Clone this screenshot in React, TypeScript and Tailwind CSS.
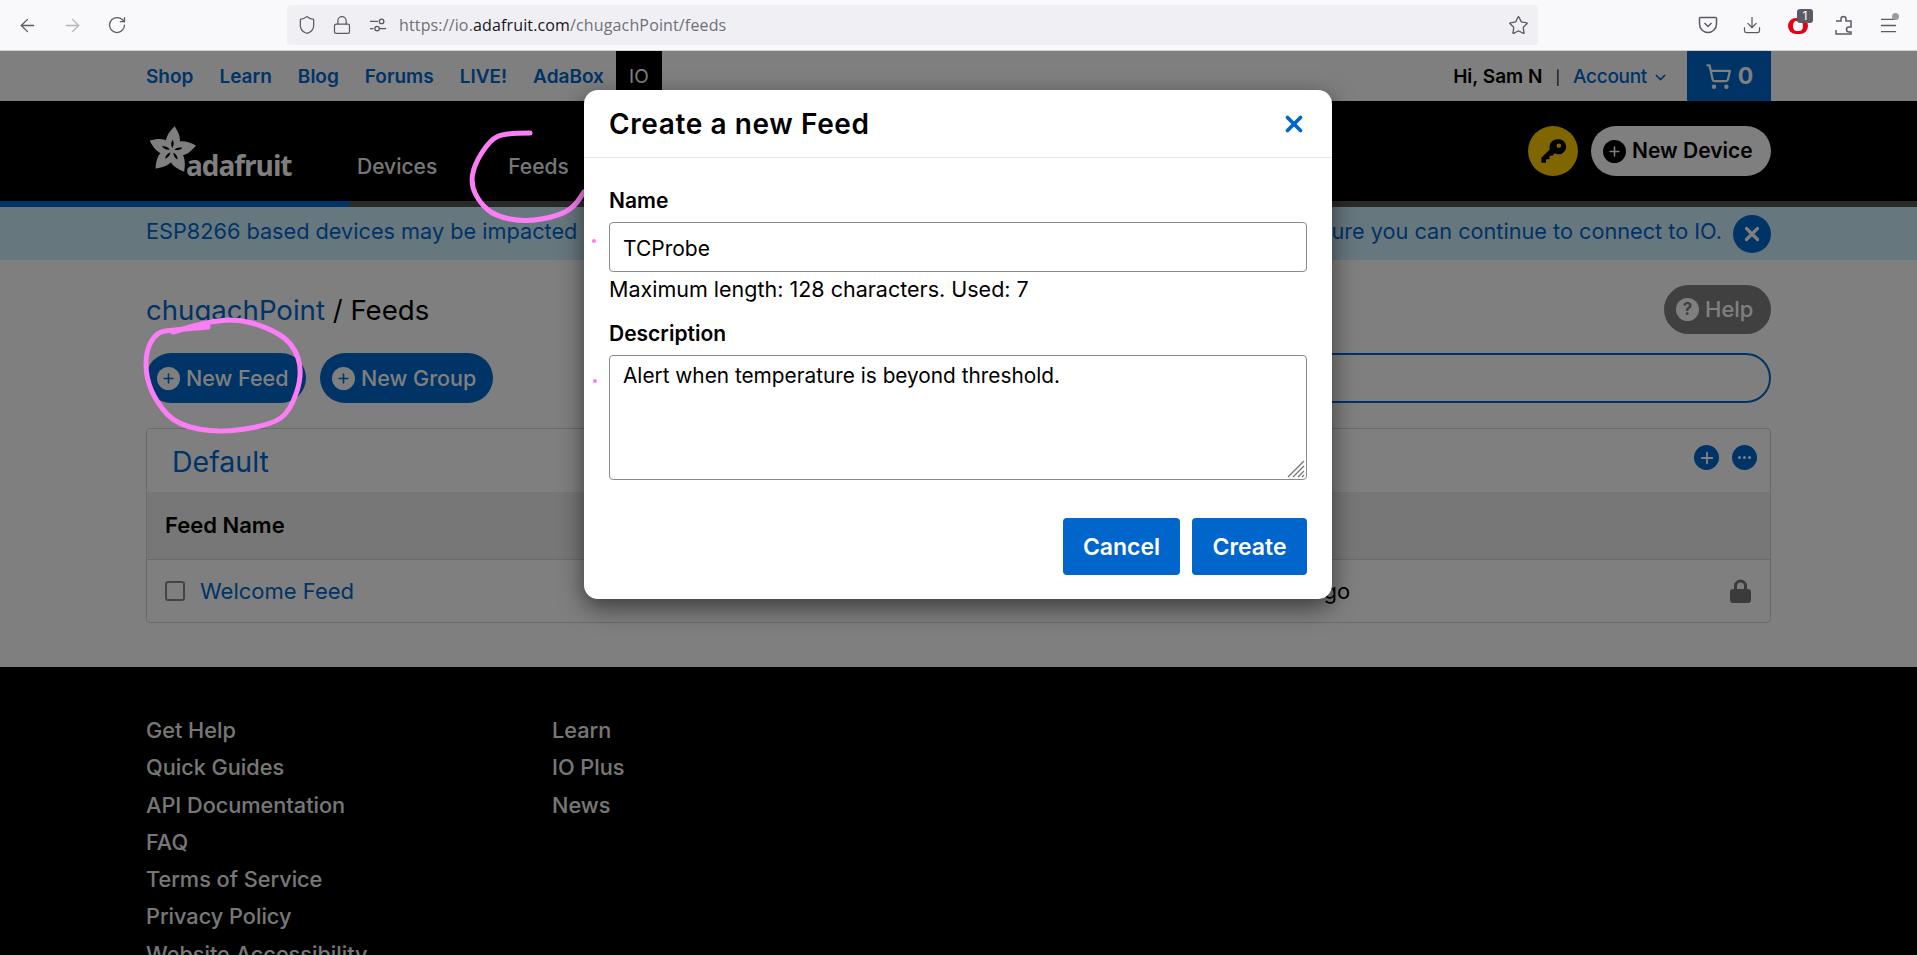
import {
  ArrowLeft,
  ArrowRight,
  ChevronDown,
  Download,
  Menu,
  Plus,
  RotateCw,
  Shield,
  Lock,
  ShoppingCart,
  Star,
  X,
} from "lucide-react";

const topLinks = ["Shop", "Learn", "Blog", "Forums", "LIVE!", "AdaBox"];
const footerLeft = [
  "Get Help",
  "Quick Guides",
  "API Documentation",
  "FAQ",
  "Terms of Service",
  "Privacy Policy",
  "Website Accessibility",
];
const footerRight = ["Learn", "IO Plus", "News"];

// midpoint smoothing, good enough for the hand drawn marker strokes
const smooth = (pts: number[][]) => {
  let d = `M${pts[0][0]} ${pts[0][1]}`;
  for (let i = 1; i < pts.length - 1; i++) {
    const mx = (pts[i][0] + pts[i + 1][0]) / 2;
    const my = (pts[i][1] + pts[i + 1][1]) / 2;
    d += ` Q${pts[i][0]} ${pts[i][1]} ${mx} ${my}`;
  }
  const last = pts[pts.length - 1];
  return d + ` L${last[0]} ${last[1]}`;
};

const feedsMark = [
  [530, 133],
  [505, 133],
  [490, 140],
  [474, 165],
  [471, 185],
  [480, 203],
  [495, 216],
  [525, 222],
  [558, 216],
  [574, 207],
  [584, 192],
];
const newFeedMark = [
  [208, 327],
  [173, 330],
  [157, 332],
  [146, 350],
  [146, 378],
  [157, 403],
  [177, 425],
  [220, 433],
  [270, 425],
  [290, 412],
  [303, 373],
  [293, 343],
  [267, 327],
  [237, 319],
  [207, 322],
  [173, 332],
];

function Flower() {
  return (
    <svg viewBox="0 0 100 100" className="w-[52px] h-[47px] shrink-0">
      {[0, 72, 144, 216, 288].map((a) => (
        <g key={a} transform={`rotate(${a + 4} 50 52)`}>
          <path d="M50 52 C26 40 36 18 52 0 C66 18 74 40 50 52Z" fill="#fff" />
          <path d="M50 47 C46 40 47 34 50 29 C53 34 54 40 50 47Z" fill="#000" />
        </g>
      ))}
    </svg>
  );
}

function PlusDot({ dark }: { dark?: boolean }) {
  return (
    <span
      className={`w-[23px] h-[23px] rounded-full flex items-center justify-center shrink-0 ${
        dark ? "bg-black text-white" : "bg-white text-[#0066cc]"
      }`}
    >
      <Plus size={15} strokeWidth={2.5} />
    </span>
  );
}

function BrowserBar() {
  return (
    <div className="h-[51px] bg-[#f9f9fb] border-b border-[#cfcfd8] flex items-center text-[#5b5b66] shrink-0">
      <div className="w-[287px] flex items-center pl-[17px] gap-[24px]">
        <ArrowLeft size={21} strokeWidth={1.5} />
        <ArrowRight size={21} strokeWidth={1.5} className="text-[#b5b5bb]" />
        <RotateCw size={20} strokeWidth={1.5} />
      </div>
      <div className="w-[1251px] h-[40px] rounded-[4px] bg-[#f0f0f4] flex items-center pl-[10px] pr-[9px]">
        <Shield size={20} strokeWidth={1.5} />
        <Lock size={20} strokeWidth={1.5} className="ml-[15px]" />
        <svg viewBox="0 0 20 20" className="w-[18px] h-[18px] ml-[17px]" fill="none" stroke="currentColor" strokeWidth="1.5">
          <path d="M1 6h9M1 14h4" />
          <circle cx="14" cy="6" r="2.5" />
          <circle cx="9" cy="14" r="2.5" />
          <path d="M12 14h7" />
        </svg>
        <span className="ml-[12px] text-[16px] font-['Open_Sans',sans-serif] text-[#6f6f78] tracking-[0.14px]">
          https://io.<span className="text-[#15141a]">adafruit.com</span>/chugachPoint/feeds
        </span>
        <Star size={21} strokeWidth={1.5} className="ml-auto" />
      </div>
      <div className="flex-1 relative">
        <svg viewBox="0 0 20 20" className="w-[20px] h-[20px] absolute left-[160px] top-[-10px]" fill="none" stroke="currentColor" strokeWidth="1.5">
          <path d="M2.5 2.5h15a1 1 0 0 1 1 1V9a8.5 8.5 0 0 1-17 0V3.500a1 1 0 0 1 1-1Z" />
          <path d="M6.500 8l3.500 3.500L13.500 8" />
        </svg>
        <Download size={20} strokeWidth={1.5} className="absolute left-[204px] top-[-10px]" />
        <div className="absolute left-[250px] top-[-7px] w-[20px] h-[16px] rounded-full border-x-[5px] border-y-[3px] border-[#e60012]" />
        <span className="absolute left-[259px] top-[-16px] w-[16px] h-[14px] rounded-[3px] bg-[#5b5b66] text-white text-[12px] leading-[14px] text-center">
          1
        </span>
        <svg viewBox="0 0 20 20" className="w-[20px] h-[22px] absolute left-[296px] top-[-11px]" fill="none" stroke="currentColor" strokeWidth="1.5">
          <path d="M2 6h5V4a2.500 2.500 0 0 1 5 0v2h5v6h-2a2.500 2.500 0 0 0 0 5v0h2v2H2v-4" />
        </svg>
        <Menu size={21} strokeWidth={1.5} className="absolute left-[340px] top-[-10px]" />
        <span className="absolute left-[354px] top-[-12px] w-[7px] h-[7px] rounded-full bg-[#9a9aa2]" />
      </div>
    </div>
  );
}

function TopNav() {
  return (
    <div className="h-[50px] bg-white flex items-center pl-[146px] pr-[146px] text-[19px] font-semibold text-[#0066cc]">
      <div className="flex items-center h-full pt-[3px] gap-[26px]">
        {topLinks.map((l) => (
          <a key={l}>{l}</a>
        ))}
      </div>
      <div className="h-full w-[46px] ml-[12px] pt-[3px] bg-black text-white font-normal flex items-center justify-center">IO</div>
      <div className="ml-auto flex items-center h-full">
        <span className="pt-[3px] text-black">Hi, Sam N</span>
        <span className="pt-[3px] mx-[13px] text-black font-normal text-[14px]">|</span>
        <span className="pt-[3px] font-medium tracking-[-0.3px]">Account</span>
        <ChevronDown size={17} className="mt-[3px] ml-[5px]" />
        <div className="ml-[18px] w-[84px] h-full bg-[#0066cc] text-white flex items-center justify-center gap-[6px] text-[23px] font-bold">
          <ShoppingCart size={27} strokeWidth={2} />
          <span>0</span>
        </div>
      </div>
    </div>
  );
}

function Header() {
  return (
    <div className="h-[106px] bg-black flex flex-col">
      <div className="flex-1 flex items-center px-[146px] text-white">
        <div className="flex items-end w-[211px] -translate-y-[2px]">
          <Flower />
          <span className="-ml-[12px] translate-y-[7px] text-[28px] leading-[30px] font-bold font-['Open_Sans',sans-serif] tracking-[-1.100px]">adafruit</span>
        </div>
        <a className="mt-[32px] text-[21px] font-medium text-[#eee]">Devices</a>
        <a className="mt-[32px] ml-[71px] text-[21px] font-medium text-[#eee]">Feeds</a>
        <div className="ml-auto flex items-center gap-[13px]">
          <span className="w-[50px] h-[50px] rounded-full bg-[#ffcc00] flex items-center justify-center">
            <svg viewBox="0 0 24 24" className="w-[28px] h-[28px]" fill="#000">
              <path d="M15.500 2a6.500 6.500 0 0 0-6.200 8.500L2 17.800V22h4v-3h3v-3h2.500l2-2a6.500 6.500 0 1 0 2-12Zm1.500 3.500a2 2 0 1 1 0 4 2 2 0 0 1 0-4Z" />
            </svg>
          </span>
          <span className="w-[180px] h-[50px] rounded-full bg-white text-black text-[21px] font-semibold flex items-center pl-[12px] gap-[6px]">
            <PlusDot dark />
            New Device
          </span>
        </div>
      </div>
      <div className="h-[6px] bg-[#555] shrink-0">
        <div className="h-full w-[349px] bg-[#0066cc]" />
      </div>
    </div>
  );
}

function FeedPanel() {
  return (
    <div className="mt-[25px] h-[195px] border border-[#d5d5d5] rounded-[4px] flex flex-col">
      <div className="h-[63px] flex items-center pl-[25px] pr-[13px]">
        <span className="pt-[4px] text-[28.500px] text-[#0066cc]">Default</span>
        <span className="ml-auto w-[25px] h-[25px] rounded-full bg-[#0066cc] text-white flex items-center justify-center -translate-y-[3px]">
          <Plus size={18} strokeWidth={2.5} />
        </span>
        <span className="ml-[13px] w-[25px] h-[25px] rounded-full bg-[#0066cc] text-white flex items-center justify-center gap-[2px] -translate-y-[3px]">
          <i className="w-[3px] h-[3px] rounded-full bg-white" />
          <i className="w-[3px] h-[3px] rounded-full bg-white" />
          <i className="w-[3px] h-[3px] rounded-full bg-white" />
        </span>
      </div>
      <div className="h-[68px] bg-[#eeeeee] border-b border-[#d5d5d5] grid grid-cols-[437px_575px_1fr] items-center font-semibold text-[22px] text-black pl-[18px]">
        <span>Feed Name</span>
        <span>Key</span>
        <span>Recorded</span>
      </div>
      <div className="flex-1 grid grid-cols-[437px_575px_1fr_auto] items-center text-[22px] text-black pl-[18px] pr-[19px]">
        <span className="flex items-center gap-[15px]">
          <span className="w-[20px] h-[20px] border-2 border-[#888] rounded-[3px]" />
          <a className="text-[#0066cc]">Welcome Feed</a>
        </span>
        <span>welcome-feed</span>
        <span>about 1 hour ago</span>
        <svg viewBox="0 0 21 24" className="w-[21px] h-[24px]" fill="#777">
          <path d="M4 11V7a6.500 6.500 0 0 1 13 0v4h-3V7a3.500 3.500 0 0 0-7 0v4Z" />
          <rect x="0" y="10" width="21" height="14" rx="3" />
        </svg>
      </div>
    </div>
  );
}

function Footer() {
  return (
    <div className="mt-[44px] bg-black pt-[45px] h-[400px] pl-[146px] flex text-[21.700px] font-medium leading-[37.300px] text-[#eee]">
      <div className="w-[406px] flex flex-col">
        {footerLeft.map((l) => (
          <a key={l}>{l}</a>
        ))}
      </div>
      <div className="flex flex-col">
        {footerRight.map((l) => (
          <a key={l}>{l}</a>
        ))}
      </div>
    </div>
  );
}

function Modal() {
  return (
    <div className="absolute left-[584px] top-[90px] w-[748px] h-[509px] bg-white rounded-[14px] shadow-[0_8px_24px_rgba(0,0,0,0.55)] flex flex-col text-black">
      <div className="h-[68px] border-b border-[#e5e5e5] flex items-center justify-between pl-[25px] pr-[25px] shrink-0">
        <h2 className="pt-[1px] text-[28px] font-semibold tracking-[0.6px]">Create a new Feed</h2>
        <X size={26} strokeWidth={3.5} className="text-[#0066cc]" />
      </div>
      <div className="flex-1 px-[25px] pt-[28px] flex flex-col">
        <label className="text-[21px] font-semibold leading-[30px]">Name</label>
        <input
          readOnly
          value="TCProbe"
          className="mt-[6px] h-[50px] px-[13px] pt-[2px] border border-[#8a8a8a] rounded-[4px] text-[21px] outline-none"
        />
        <p className="mt-[2px] text-[21.500px] leading-[30px]">Maximum length: 128 characters. Used: 7</p>
        <label className="mt-[15px] text-[21px] font-semibold leading-[30px]">Description</label>
        <div className="relative mt-[6px] h-[125px]">
          <textarea
            readOnly
            value="Alert when temperature is beyond threshold."
            className="w-full h-full resize-none px-[13px] pt-[4px] border border-[#8a8a8a] rounded-[4px] text-[20.800px] outline-none"
          />
          <svg viewBox="0 0 18 18" className="absolute right-[2px] bottom-[2px] w-[18px] h-[18px]" stroke="#777" strokeWidth="1.3">
            <path d="M1 17 17 1M6 17 17 6M11 17 17 11M15 17 17 15" />
          </svg>
        </div>
        <div className="mt-[38px] flex justify-end gap-[12px]">
          <button className="w-[117px] h-[57px] pt-[1px] rounded-[4px] bg-[#0066cc] text-white text-[23px] font-semibold">Cancel</button>
          <button className="w-[115px] h-[57px] pt-[1px] rounded-[4px] bg-[#0066cc] text-white text-[23px] font-semibold">Create</button>
        </div>
      </div>
    </div>
  );
}

export default function App() {
  return (
    <div className="relative h-[955px] overflow-hidden flex flex-col bg-white font-['Inter',sans-serif]">
      <BrowserBar />
      <div className="relative flex-1 overflow-hidden">
        <TopNav />
        <Header />
        <div className="h-[53px] bg-[#cfeffd] flex items-center justify-between pl-[146px] pr-[146px] text-[21.700px] text-[#0066cc]">
          <span className="-mt-[4px]">ESP8266 based devices may be impacted</span>
          <span className="flex items-center gap-[11px]">
            <span className="-mt-[4px]">ure you can continue to connect to IO.</span>
            <span className="w-[38px] h-[38px] rounded-full bg-[#0066cc] text-white flex items-center justify-center">
              <X size={22} strokeWidth={3.5} />
            </span>
          </span>
        </div>
        <main className="px-[146px] pt-[25px]">
          <div className="flex items-center justify-between h-[49px]">
            <h1 className="pt-[3px] text-[27.600px]">
              <a className="text-[#0066cc]">chugachPoint</a> / Feeds
            </h1>
            <span className="w-[107px] h-[49px] rounded-full bg-[#808080] text-white text-[22px] font-medium flex items-center pl-[12px] gap-[6px]">
              <span className="w-[23px] h-[23px] rounded-full bg-white text-[#808080] text-[17px] font-bold flex items-center justify-center">?</span>
              Help
            </span>
          </div>
          <div className="mt-[19px] flex items-center gap-[14px]">
            <button className="h-[50px] w-[160px] rounded-full bg-[#0066cc] text-white text-[21.500px] font-medium flex items-center pl-[11px] gap-[6px]">
              <PlusDot />
              New Feed
            </button>
            <button className="h-[50px] w-[173px] rounded-full bg-[#0066cc] text-white text-[21.500px] font-medium flex items-center pl-[12px] gap-[6px]">
              <PlusDot />
              New Group
            </button>
            <div className="ml-auto h-[50px] w-[1150px] rounded-full border-2 border-[#0066cc]" />
          </div>
          <FeedPanel />
        </main>
        <Footer />
        <div className="absolute inset-0 bg-black/50" />
      </div>
      <svg viewBox="0 0 1917 955" className="absolute inset-0 w-[1917px] h-[955px] pointer-events-none" fill="none" stroke="#fb7ef6" strokeWidth="5" strokeLinecap="round">
        <path d={smooth(feedsMark)} />
        <path d={smooth(newFeedMark)} />
      </svg>
      <Modal />
      <span className="absolute left-[592px] top-[239px] w-[4px] h-[4px] rounded-full bg-[#fb7ef6]" />
      <span className="absolute left-[593px] top-[379px] w-[4px] h-[4px] rounded-full bg-[#fb7ef6]" />
    </div>
  );
}
